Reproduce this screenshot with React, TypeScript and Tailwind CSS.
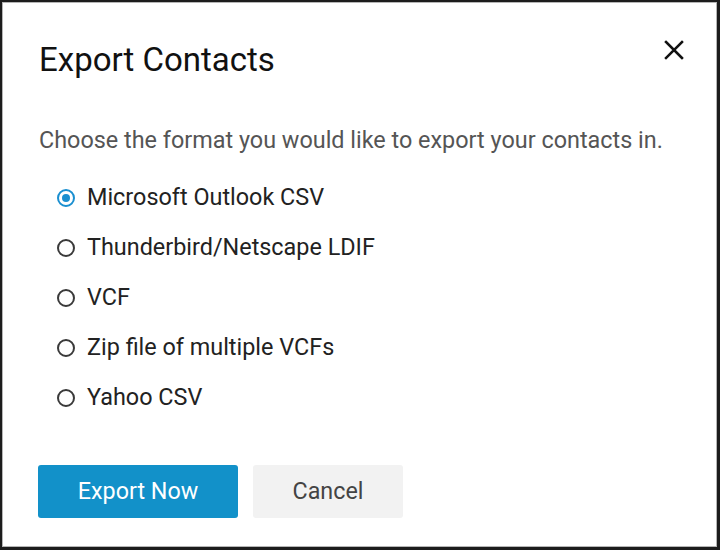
import { useState } from "react";

const formats = [
  "Microsoft Outlook CSV",
  "Thunderbird/Netscape LDIF",
  "VCF",
  "Zip file of multiple VCFs",
  "Yahoo CSV",
];

const Radio = ({ checked }: { checked: boolean }) =>
  checked ? (
    <span className="flex h-[18px] w-[18px] items-center justify-center rounded-full border-2 border-[#1a8fd0]">
      <span className="h-[8px] w-[8px] rounded-full bg-[#1a8fd0]" />
    </span>
  ) : (
    <span className="h-[18px] w-[18px] rounded-full border-2 border-[#3a3a3a]" />
  );

const App = () => {
  const [selected, setSelected] = useState(0);

  return (
    <div
      className="h-[550px] w-[720px] bg-white border-t-2 border-l-2 border-r-[3px] border-b-[3px] border-[#1c1c1c] shadow-[inset_0_0_0_1px_#b5b5b5]"
      style={{ fontFamily: "Roboto, 'Liberation Sans', sans-serif" }}
    >
      <div className="flex items-start justify-between pl-[37px] pr-[32px] pt-[38px]">
        <h1 className="text-[33px] leading-[40px] text-[#111]">Export Contacts</h1>
        <button className="mt-[-1px] text-[#111]" aria-label="Close">
          <svg width="22" height="22" viewBox="0 0 22 22" stroke="currentColor" strokeWidth="2.5" strokeLinecap="square">
            <path d="M3 3L19 19M19 3L3 19" />
          </svg>
        </button>
      </div>

      <p className="mt-[46px] pl-[37px] text-[23.4px] leading-[28px] text-[#555]">
        Choose the format you would like to export your contacts in.
      </p>

      <ul className="mt-[19px] pl-[55px]">
        {formats.map((f, i) => (
          <li
            key={f}
            className="flex h-[50px] cursor-pointer items-center gap-[12px] text-[23.4px] text-[#222]"
            onClick={() => setSelected(i)}
          >
            <Radio checked={selected === i} />
            <span>{f}</span>
          </li>
        ))}
      </ul>

      <div className="mt-[42px] flex gap-[15px] pl-[36px]">
        <button className="h-[53px] w-[200px] rounded-[3px] bg-[#1291c9] text-[23.3px] text-white">
          Export Now
        </button>
        <button className="h-[53px] w-[150px] rounded-[3px] bg-[#f2f2f2] text-[23.3px] text-[#444]">
          Cancel
        </button>
      </div>
    </div>
  );
};

export default App;
